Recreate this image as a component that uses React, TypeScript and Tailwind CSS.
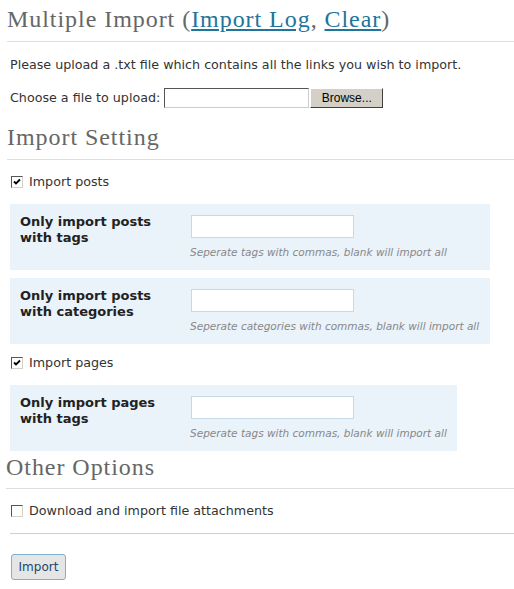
import React from 'react';

const serif = "font-['Liberation_Serif','DejaVu_Serif',serif] tracking-[0.95px]";

function Check({ checked }: { checked?: boolean }) {
  return (
    <span className="w-[12px] h-[12px] shrink-0 bg-white border border-t-[#555] border-l-[#555] border-b-[#d4d0c8] border-r-[#d4d0c8] flex items-center justify-center">
      {checked && (
        <svg width="8" height="8" viewBox="0 0 8 8">
          <path d="M1 3.5 L3 5.5 L7 1.5" stroke="#000" strokeWidth="1.8" fill="none" />
        </svg>
      )}
    </span>
  );
}

function CheckRow({ label, checked, className }: { label: string; checked?: boolean; className?: string }) {
  return (
    <label className={`flex items-center gap-[6px] ml-[11px] leading-[16px] ${className ?? ''}`}>
      <Check checked={checked} />
      <span>{label}</span>
    </label>
  );
}

function FilterBox({ line1, line2, hint, width, className }: { line1: string; line2: string; hint: string; width: string; className?: string }) {
  return (
    <div className={`flex ml-[10px] h-[66px] bg-[#eaf2fa] pl-[10px] ${width} ${className ?? ''}`}>
      <div className="w-[171px] pt-[10px] text-[13px] font-bold leading-[16px] text-[#222]">
        {line1}
        <br />
        {line2}
      </div>
      <div className="pt-[11px]">
        <input type="text" className="block w-[163px] h-[23px] bg-white border border-[#c6d9e9] outline-none" />
        <p className="mt-[7px] ml-[-1px] text-[10.5px] italic leading-[14px] text-[#888] whitespace-nowrap">{hint}</p>
      </div>
    </div>
  );
}

export default function App() {
  return (
    <div className="w-[514px] min-h-[589px] bg-white text-[12.7px] text-[#333] font-['DejaVu_Sans','Verdana',sans-serif]">
      {/* Title */}
      <h2 className={`${serif} text-[24px] leading-[30px] text-[#666] pt-[4px] pb-[7px] ml-[7px] border-b border-[#dfdfdf]`}>
        Multiple Import (
        <a href="#" className="text-[#21759b] underline">Import Log</a>,{' '}
        <a href="#" className="text-[#21759b] underline">Clear</a>)
      </h2>

      <p className="ml-[10px] mt-[15px] leading-[16px] whitespace-nowrap">
        Please upload a .txt file which contains all the links you wish to import.
      </p>

      <div className="flex items-center ml-[10px] mt-[15px] h-[20px]">
        <span>Choose a file to upload:</span>
        <input type="text" className="ml-[4px] w-[145px] h-[20px] bg-white border border-t-[#555] border-l-[#555] border-b-[#ccc] border-r-[#ccc] outline-none" />
        <button className="ml-[1px] w-[73px] h-[20px] bg-[#d4d0c8] border border-t-white border-l-white border-b-[#404040] border-r-[#404040] text-[12px] text-black font-['Liberation_Sans',sans-serif]">
          Browse...
        </button>
      </div>

      {/* Import Setting */}
      <h3 className={`${serif} text-[24px] leading-[30px] text-[#666] mt-[14px] pb-[7px] ml-[7px] border-b border-[#dfdfdf]`}>
        Import Setting
      </h3>

      <CheckRow label="Import posts" checked className="mt-[14px]" />

      <FilterBox
        className="mt-[14px]"
        width="w-[480px]"
        line1="Only import posts"
        line2="with tags"
        hint="Seperate tags with commas, blank will import all"
      />
      <FilterBox
        className="mt-[8px]"
        width="w-[480px]"
        line1="Only import posts"
        line2="with categories"
        hint="Seperate categories with commas, blank will import all"
      />

      <CheckRow label="Import pages" checked className="mt-[11px]" />

      <FilterBox
        className="mt-[14px]"
        width="w-[447px]"
        line1="Only import pages"
        line2="with tags"
        hint="Seperate tags with commas, blank will import all"
      />

      {/* Other Options */}
      <h3 className={`${serif} text-[24px] leading-[30px] text-[#666] mt-[1px] pb-[6px] ml-[6px] border-b border-[#dfdfdf]`}>
        Other Options
      </h3>

      <CheckRow label="Download and import file attachments" className="mt-[14px]" />

      <div className="ml-[10px] mt-[14px] border-t border-[#cfcfcf]" />

      <button className="ml-[11px] mt-[20px] w-[55px] h-[26px] rounded-[3px] bg-[#e5e5e5] border border-[#7fb0cf] text-[12px] text-[#21456b]">
        Import
      </button>
    </div>
  );
}
